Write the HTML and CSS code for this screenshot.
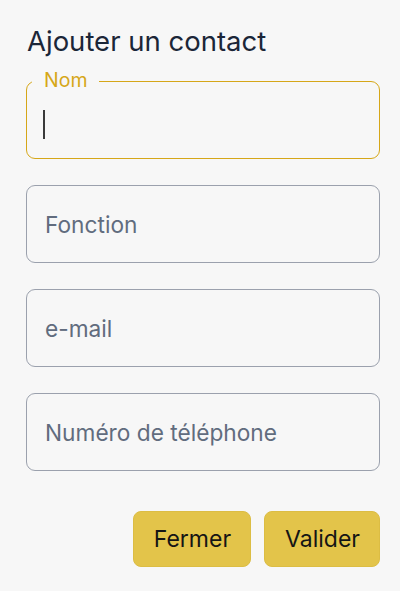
FILE: index.html
```html
<!DOCTYPE html>
<html lang="fr">
<head>
  <meta charset="UTF-8" />
  <meta name="viewport" content="width=device-width, initial-scale=1.0" />
  <title>Ajouter un contact</title>
  <link rel="stylesheet" href="styles.css">
</head>
<body>
  <div class="container">
    <h1>Ajouter un contact</h1>

    <form class="contact-form" onsubmit="return false;">
      <div class="field active">
        <label class="field-label" for="nom">Nom</label>
        <span class="caret"></span>
        <input type="text" id="nom" />
      </div>
      <div class="field">
        <input type="text" id="fonction" placeholder="Fonction" />
      </div>
      <div class="field">
        <input type="email" id="email" placeholder="e-mail" />
      </div>
      <div class="field">
        <input type="tel" id="tel" placeholder="Numéro de téléphone" />
      </div>

      <div class="actions">
        <button type="button" class="btn">Fermer</button>
        <button type="submit" class="btn">Valider</button>
      </div>
    </form>
  </div>
</body>
</html>
```

FILE: styles.css
```css
:root {
  --bg: #f7f7f7;
  --text: #1b2638;
  --muted: #616c7e;
  --border: #9ba1ad;
  --accent: #d6a719;
  --button-bg: #e3c44a;
}
html, body { margin: 0; padding: 0; }
body {
  background: var(--bg);
  color: var(--text);
  font-family: Inter, "Noto Sans", sans-serif;
}
.container { padding: 24px 20px 0 26px; }
h1 {
  margin: 0 0 23px 1px;
  font-size: 27.5px;
  font-weight: 400;
  line-height: 34px;
}
.contact-form { display: flex; flex-direction: column; gap: 26px; }
.field {
  position: relative;
  display: flex;
  align-items: center;
  height: 76px;
  border: 1px solid var(--border);
  border-radius: 9px;
}
.field.active { border-color: var(--accent); }
.field-label {
  position: absolute;
  top: -12px;
  left: 5px;
  padding: 0 12px;
  background: var(--bg);
  color: var(--accent);
  font-size: 19.5px;
  line-height: 20px;
}
.caret {
  width: 1.5px;
  height: 29px;
  margin-left: 16px;
  margin-top: 9px;
  background: #3a3a3a;
}
.field input {
  flex: 1;
  min-width: 0;
  padding: 0 0 0 18px;
  border: 0;
  background: transparent;
  color: var(--text);
  font: inherit;
  font-size: 22.7px;
  outline: none;
}
.field.active input { padding-left: 0; }
.field input::placeholder { color: var(--muted); }
.actions {
  display: flex;
  justify-content: flex-end;
  gap: 13px;
  margin-top: 14px;
}
.btn {
  height: 56px;
  padding: 0 19px 0 20px;
  border: 1px solid #dcbd44;
  border-radius: 8px;
  background: var(--button-bg);
  color: #151515;
  font: inherit;
  font-size: 23px;
  cursor: pointer;
}
```
